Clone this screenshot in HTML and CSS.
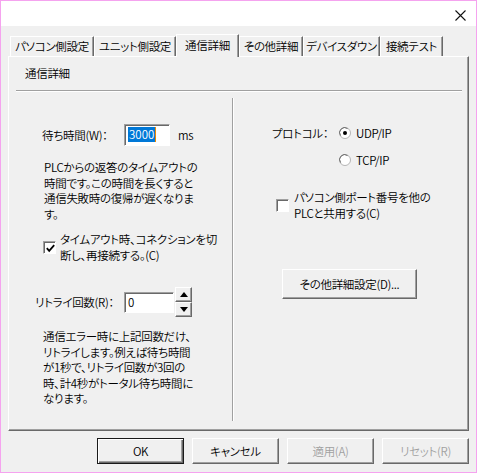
FILE: index.html
```html
<!DOCTYPE html>
<html lang="ja">
<head>
    <meta charset="UTF-8">
    <title>通信詳細</title>
    <link rel="stylesheet" href="styles.css">
</head>
<body>
    <div class="window">
        <div class="titlebar">
            <svg class="close" width="11" height="11" viewBox="0 0 11 11">
                <path d="M0.5 0.5 L10.5 10.5 M10.5 0.5 L0.5 10.5" stroke="#111" stroke-width="1.1" fill="none"/>
            </svg>
        </div>

        <div class="main">
            <div class="tabs">
                <div class="tab w1">パソコン側設定</div>
                <div class="tab w2">ユニット側設定</div>
                <div class="tab active w3">通信詳細</div>
                <div class="tab w4">その他詳細</div>
                <div class="tab w5">デバイスダウン</div>
                <div class="tab w6">接続テスト</div>
            </div>

            <div class="panel">
                <div class="panel-title">通信詳細</div>
                <div class="sep"></div>

                <div class="columns">
                    <!-- left column: timeout / retry -->
                    <div class="col-left">
                        <div class="wait-row">
                            <span class="label wait-label">待ち時間(W)：</span>
                            <span class="field wait-field"><span class="selected">3000</span></span>
                            <span class="unit">ms</span>
                        </div>
                        <p class="note note-wait">PLCからの返答のタイムアウトの<br>時間です。この時間を長くすると<br>通信失敗時の復帰が遅くなりま<br>す。</p>

                        <div class="check-row reconnect">
                            <span class="checkbox">
                                <svg width="9" height="9" viewBox="0 0 9 9"><path d="M0.8 4.2 L3.2 6.8 L8.2 1.2" stroke="#000" stroke-width="1.8" fill="none"/></svg>
                            </span>
                            <span class="check-text">タイムアウト時、コネクションを切<br>断し、再接続する。(C)</span>
                        </div>

                        <div class="retry-row">
                            <span class="label retry-label">リトライ回数(R)：</span>
                            <span class="field retry-field">0</span>
                            <span class="spinner">
                                <span class="spin-btn"><span class="tri up"></span></span>
                                <span class="spin-btn"><span class="tri down"></span></span>
                            </span>
                        </div>
                        <p class="note note-retry">通信エラー時に上記回数だけ、<br>リトライします。例えば待ち時間<br>が1秒で、リトライ回数が3回の<br>時、計4秒がトータル待ち時間に<br>なります。</p>
                    </div>

                    <div class="vsep"></div>

                    <!-- right column: protocol -->
                    <div class="col-right">
                        <div class="proto-row">
                            <span class="proto-label">プロトコル：</span>
                            <span class="radio">
                                <svg width="12" height="12" viewBox="0 0 12 12">
                                    <circle cx="6" cy="6" r="5.5" fill="#fff" stroke="#b4b4b4"/>
                                    <path d="M1.6 8.6 A5 5 0 0 1 8.6 1.6" stroke="#6a6a6a" fill="none"/>
                                    <circle cx="6" cy="6" r="2" fill="#000"/>
                                </svg>
                            </span>
                            <span class="radio-text">UDP/IP</span>
                        </div>
                        <div class="proto-row tcp">
                            <span class="radio">
                                <svg width="12" height="12" viewBox="0 0 12 12">
                                    <circle cx="6" cy="6" r="5.5" fill="#fff" stroke="#b4b4b4"/>
                                    <path d="M1.6 8.6 A5 5 0 0 1 8.6 1.6" stroke="#6a6a6a" fill="none"/>
                                </svg>
                            </span>
                            <span class="radio-text">TCP/IP</span>
                        </div>

                        <div class="check-row share">
                            <span class="checkbox"></span>
                            <span class="check-text">パソコン側ポート番号を他の<br>PLCと共用する(C)</span>
                        </div>

                        <div class="button detail-btn">その他詳細設定(D)...</div>
                    </div>
                </div>
            </div>

            <div class="buttons">
                <div class="button dialog-btn default">OK</div>
                <div class="button dialog-btn">キャンセル</div>
                <div class="button dialog-btn disabled">適用(A)</div>
                <div class="button dialog-btn disabled">リセット(R)</div>
            </div>
        </div>
    </div>
</body>
</html>
```

FILE: styles.css
```css
:root {
    --face: #f0f0f0;
    --light: #ffffff;
    --shadow: #a0a0a0;
    --dark: #696969;
    --frame: #f5a3ef;
}

* {
    box-sizing: border-box;
}

body {
    margin: 0;
    font-family: "Noto Sans CJK JP", "Noto Sans", sans-serif;
    font-size: 11.5px;
    font-weight: 350;
    letter-spacing: -0.3px;
    font-feature-settings: "palt";
    color: #000;
}

.window {
    width: 477px;
    height: 473px;
    border: 1px solid var(--frame);
    background: var(--face);
    display: flex;
    flex-direction: column;
}

.titlebar {
    height: 25px;
    background: #fff;
    display: flex;
    justify-content: flex-end;
    align-items: center;
    padding-right: 10px;
    padding-top: 3px;
}

.main {
    padding: 8px 7px 0 7px;
    display: flex;
    flex-direction: column;
}

/* tabs */
.tabs {
    display: flex;
    align-items: flex-end;
    height: 22px;
    padding-left: 2px;
    position: relative;
    z-index: 1;
}

.tab {
    height: 20px;
    line-height: 19px;
    text-align: center;
    background: var(--face);
    border-top: 1px solid var(--light);
    border-left: 1px solid var(--light);
    border-right: 1px solid var(--dark);
    box-shadow: inset -1px 0 var(--shadow);
    white-space: nowrap;
}

.tab.active {
    height: 23px;
    margin-bottom: -1px;
    line-height: 20px;
    padding-bottom: 2px;
}

.w1 { width: 84px; }
.w2 { width: 82px; }
.w3 { width: 63px; }
.w4 { width: 64px; }
.w5 { width: 77px; }
.w6 { width: 63px; }

/* panel */
.panel {
    height: 375px;
    border-top: 1px solid var(--light);
    border-left: 1px solid var(--light);
    border-right: 1px solid var(--dark);
    border-bottom: 1px solid var(--dark);
    box-shadow: inset -1px -1px var(--shadow);
    padding: 0 6px 0 7px;
}

.panel-title {
    height: 33px;
    padding: 8px 0 0 9px;
    line-height: 16px;
}

.sep {
    height: 2px;
    border-top: 1px solid var(--shadow);
    border-bottom: 1px solid var(--light);
}

.columns {
    display: flex;
}

.col-left {
    width: 216px;
}

.vsep {
    width: 2px;
    height: 323px;
    margin-top: 6px;
    border-left: 1px solid var(--shadow);
    border-right: 1px solid var(--light);
}

.col-right {
    flex: 1;
}

/* fields */
.label {
    display: inline-block;
    white-space: nowrap;
}

.field {
    display: inline-block;
    background: #fff;
    border-top: 1px solid var(--shadow);
    border-left: 1px solid var(--shadow);
    border-right: 1px solid var(--light);
    border-bottom: 1px solid var(--light);
    box-shadow: inset 1px 1px var(--dark);
    padding-left: 3px;
    letter-spacing: 0;
}

.wait-row {
    display: flex;
    align-items: center;
    margin-top: 32px;
    height: 22px;
}

.wait-label {
    width: 108px;
    padding-left: 26px;
}

.wait-field {
    width: 46px;
    height: 22px;
    line-height: 19px;
}

.selected {
    display: inline-block;
    background: #0078d7;
    color: #fff;
    line-height: 15px;
    padding: 0 1px;
    border-right: 1px solid #f08a00;
}

.unit {
    margin-left: 8px;
}

.note {
    margin: 0;
    white-space: nowrap;
}

.note-wait {
    margin-top: 14px;
    padding-left: 28px;
    line-height: 15.5px;
}

.check-row {
    display: flex;
    align-items: center;
}

.checkbox {
    width: 13px;
    height: 13px;
    flex: none;
    background: #fff;
    border-top: 1px solid var(--shadow);
    border-left: 1px solid var(--shadow);
    border-right: 1px solid var(--light);
    border-bottom: 1px solid var(--light);
    box-shadow: inset 1px 1px var(--dark);
    display: flex;
    align-items: center;
    justify-content: center;
    padding: 1px 0 0 1px;
}

.check-text {
    white-space: nowrap;
}

.reconnect {
    margin-top: 10px;
    padding-left: 27px;
    line-height: 15.5px;
}

.reconnect .check-text {
    margin-left: 4px;
}

.retry-row {
    display: flex;
    align-items: center;
    height: 30px;
    margin-top: 24px;
}

.retry-label {
    width: 108px;
    padding-left: 19px;
}

.retry-field {
    width: 50px;
    height: 21px;
    line-height: 19px;
}

.spinner {
    display: flex;
    flex-direction: column;
    margin-left: 1px;
    width: 17px;
    height: 30px;
}

.spin-btn {
    flex: 1;
    display: flex;
    align-items: center;
    justify-content: center;
    background: var(--face);
    border-top: 1px solid var(--light);
    border-left: 1px solid var(--light);
    border-right: 1px solid var(--dark);
    border-bottom: 1px solid var(--dark);
    box-shadow: inset -1px -1px var(--shadow);
}

.tri {
    width: 0;
    height: 0;
    border-left: 4px solid transparent;
    border-right: 4px solid transparent;
}

.tri.up {
    border-bottom: 5px solid #000;
}

.tri.down {
    border-top: 5px solid #000;
}

.note-retry {
    margin-top: 12px;
    padding-left: 27px;
    line-height: 15.5px;
}

/* right column */
.proto-row {
    display: flex;
    align-items: center;
    height: 16px;
    margin-top: 33px;
    padding-left: 38px;
}

.proto-label {
    width: 67px;
}

.proto-row.tcp {
    margin-top: 11px;
    padding-left: 105px;
}

.radio {
    display: flex;
    width: 12px;
    height: 12px;
}

.radio-text {
    margin-left: 5px;
}

.share {
    margin-top: 22px;
    padding-left: 42px;
    line-height: 15.5px;
}

.share .check-text {
    margin-left: 5px;
}

/* buttons */
.button {
    display: flex;
    align-items: center;
    justify-content: center;
    background: var(--face);
    border-top: 1px solid var(--light);
    border-left: 1px solid var(--light);
    border-right: 1px solid var(--dark);
    border-bottom: 1px solid var(--dark);
    box-shadow: inset -1px -1px var(--shadow);
    white-space: nowrap;
}

.detail-btn {
    width: 135px;
    height: 30px;
    margin-top: 48px;
    margin-left: 48px;
}

.buttons {
    display: flex;
    justify-content: flex-end;
    gap: 8px;
    margin-top: 7px;
}

.dialog-btn {
    width: 87px;
    height: 26px;
}

.dialog-btn.default {
    border: 1px solid #1a1a1a;
    box-shadow: inset 1px 1px var(--light), inset -1px -1px var(--dark), inset -2px -2px var(--shadow);
}

.dialog-btn.disabled {
    color: #a0a0a0;
}
```
